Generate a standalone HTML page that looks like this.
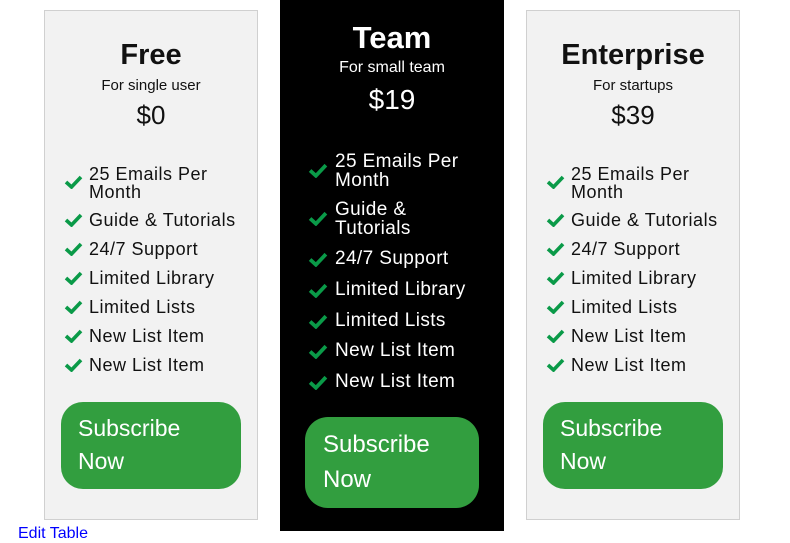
<!DOCTYPE html>
<html><head><meta charset="utf-8"><style>
body{margin:0;width:790px;height:531px;overflow:hidden;background:#fff;font-family:"Liberation Sans",Arial,sans-serif;position:relative}
.card{position:absolute;box-sizing:border-box;text-align:center}
.light{background:#f2f2f2;border:1px solid #d0d0d0;top:10px;width:214px;height:510px;color:#111}
.dark{background:#000;color:#fff;left:280px;top:0;width:224px;height:531px}
.t{position:absolute;left:0;right:0;font-weight:bold;line-height:1}
.s{position:absolute;left:0;right:0;line-height:1}
.p{position:absolute;left:0;right:0;line-height:1}
ul{list-style:none;margin:0;padding:0;position:absolute;text-align:left}
li{position:relative;white-space:nowrap}
li svg{position:absolute;left:-25px}
.btn{position:absolute;background:#329e3f;color:#fff;text-align:left;box-sizing:border-box}
</style></head><body>

<div class="card light" style="left:44px">
 <div class="t" style="top:30px;font-size:29px">Free</div>
 <div class="s" style="top:67px;font-size:15px">For single user</div>
 <div class="p" style="top:91px;font-size:26px">$0</div>
 <ul style="left:44px;top:154px;font-size:18px;letter-spacing:0.5px;line-height:18px">
  <li style="margin-bottom:10px"><svg width="19" height="14" style="top:10px" viewBox="0 0 19 14"><path d="M2 7L7.5 12L17 2" stroke="#0a9a48" stroke-width="3.6" fill="none"/></svg>25 Emails Per<br>Month</li>
  <li style="margin-bottom:11px"><svg width="19" height="14" style="top:2px" viewBox="0 0 19 14"><path d="M2 7L7.5 12L17 2" stroke="#0a9a48" stroke-width="3.6" fill="none"/></svg>Guide &amp; Tutorials</li>
  <li style="margin-bottom:11px"><svg width="19" height="14" style="top:2px" viewBox="0 0 19 14"><path d="M2 7L7.5 12L17 2" stroke="#0a9a48" stroke-width="3.6" fill="none"/></svg>24/7 Support</li>
  <li style="margin-bottom:11px"><svg width="19" height="14" style="top:2px" viewBox="0 0 19 14"><path d="M2 7L7.5 12L17 2" stroke="#0a9a48" stroke-width="3.6" fill="none"/></svg>Limited Library</li>
  <li style="margin-bottom:11px"><svg width="19" height="14" style="top:2px" viewBox="0 0 19 14"><path d="M2 7L7.5 12L17 2" stroke="#0a9a48" stroke-width="3.6" fill="none"/></svg>Limited Lists</li>
  <li style="margin-bottom:11px"><svg width="19" height="14" style="top:2px" viewBox="0 0 19 14"><path d="M2 7L7.5 12L17 2" stroke="#0a9a48" stroke-width="3.6" fill="none"/></svg>New List Item</li>
  <li><svg width="19" height="14" style="top:2px" viewBox="0 0 19 14"><path d="M2 7L7.5 12L17 2" stroke="#0a9a48" stroke-width="3.6" fill="none"/></svg>New List Item</li>
 </ul>
 <div class="btn" style="left:16px;top:391px;width:180px;height:87px;border-radius:22px;font-size:23px;line-height:33px;padding:10px 0 0 17px">Subscribe<br>Now</div>
</div>

<div class="card dark">
 <div class="t" style="top:22px;font-size:31px">Team</div>
 <div class="s" style="top:60px;font-size:16px">For small team</div>
 <div class="p" style="top:86px;font-size:28px">$19</div>
 <ul style="left:55px;top:153px;font-size:19px;letter-spacing:0.4px;line-height:18.5px">
  <li style="margin-bottom:11px"><svg width="20" height="15" style="top:10px;left:-27px" viewBox="0 0 19 14"><path d="M2 7L7.5 12L17 2" stroke="#0a9a48" stroke-width="3.6" fill="none"/></svg>25 Emails Per<br>Month</li>
  <li style="margin-bottom:12px"><svg width="20" height="15" style="top:10px;left:-27px" viewBox="0 0 19 14"><path d="M2 7L7.5 12L17 2" stroke="#0a9a48" stroke-width="3.6" fill="none"/></svg>Guide &amp;<br>Tutorials</li>
  <li style="margin-bottom:12.3px"><svg width="20" height="15" style="top:2px;left:-27px" viewBox="0 0 19 14"><path d="M2 7L7.5 12L17 2" stroke="#0a9a48" stroke-width="3.6" fill="none"/></svg>24/7 Support</li>
  <li style="margin-bottom:12.3px"><svg width="20" height="15" style="top:2px;left:-27px" viewBox="0 0 19 14"><path d="M2 7L7.5 12L17 2" stroke="#0a9a48" stroke-width="3.6" fill="none"/></svg>Limited Library</li>
  <li style="margin-bottom:12.3px"><svg width="20" height="15" style="top:2px;left:-27px" viewBox="0 0 19 14"><path d="M2 7L7.5 12L17 2" stroke="#0a9a48" stroke-width="3.6" fill="none"/></svg>Limited Lists</li>
  <li style="margin-bottom:12.3px"><svg width="20" height="15" style="top:2px;left:-27px" viewBox="0 0 19 14"><path d="M2 7L7.5 12L17 2" stroke="#0a9a48" stroke-width="3.6" fill="none"/></svg>New List Item</li>
  <li><svg width="20" height="15" style="top:2px;left:-27px" viewBox="0 0 19 14"><path d="M2 7L7.5 12L17 2" stroke="#0a9a48" stroke-width="3.6" fill="none"/></svg>New List Item</li>
 </ul>
 <div class="btn" style="left:25px;top:417px;width:174px;height:91px;border-radius:23px;font-size:24px;line-height:35px;padding:10px 0 0 18px">Subscribe<br>Now</div>
</div>

<div class="card light" style="left:526px">
 <div class="t" style="top:30px;font-size:29px">Enterprise</div>
 <div class="s" style="top:67px;font-size:15px">For startups</div>
 <div class="p" style="top:91px;font-size:26px">$39</div>
 <ul style="left:44px;top:154px;font-size:18px;letter-spacing:0.5px;line-height:18px">
  <li style="margin-bottom:10px"><svg width="19" height="14" style="top:10px" viewBox="0 0 19 14"><path d="M2 7L7.5 12L17 2" stroke="#0a9a48" stroke-width="3.6" fill="none"/></svg>25 Emails Per<br>Month</li>
  <li style="margin-bottom:11px"><svg width="19" height="14" style="top:2px" viewBox="0 0 19 14"><path d="M2 7L7.5 12L17 2" stroke="#0a9a48" stroke-width="3.6" fill="none"/></svg>Guide &amp; Tutorials</li>
  <li style="margin-bottom:11px"><svg width="19" height="14" style="top:2px" viewBox="0 0 19 14"><path d="M2 7L7.5 12L17 2" stroke="#0a9a48" stroke-width="3.6" fill="none"/></svg>24/7 Support</li>
  <li style="margin-bottom:11px"><svg width="19" height="14" style="top:2px" viewBox="0 0 19 14"><path d="M2 7L7.5 12L17 2" stroke="#0a9a48" stroke-width="3.6" fill="none"/></svg>Limited Library</li>
  <li style="margin-bottom:11px"><svg width="19" height="14" style="top:2px" viewBox="0 0 19 14"><path d="M2 7L7.5 12L17 2" stroke="#0a9a48" stroke-width="3.6" fill="none"/></svg>Limited Lists</li>
  <li style="margin-bottom:11px"><svg width="19" height="14" style="top:2px" viewBox="0 0 19 14"><path d="M2 7L7.5 12L17 2" stroke="#0a9a48" stroke-width="3.6" fill="none"/></svg>New List Item</li>
  <li><svg width="19" height="14" style="top:2px" viewBox="0 0 19 14"><path d="M2 7L7.5 12L17 2" stroke="#0a9a48" stroke-width="3.6" fill="none"/></svg>New List Item</li>
 </ul>
 <div class="btn" style="left:16px;top:391px;width:180px;height:87px;border-radius:22px;font-size:23px;line-height:33px;padding:10px 0 0 17px">Subscribe<br>Now</div>
</div>

<div style="position:absolute;left:18px;top:525px;color:#00f;font-size:16px;line-height:18px">Edit Table</div>
</body></html>
